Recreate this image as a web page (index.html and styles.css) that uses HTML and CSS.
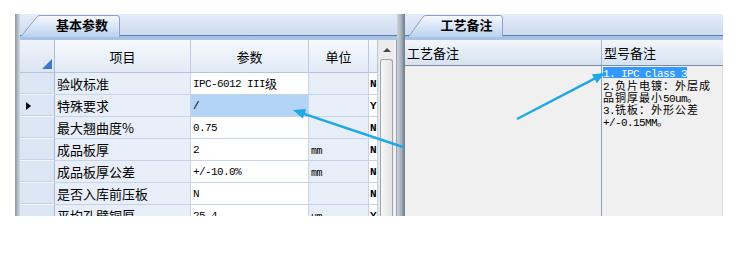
FILE: index.html
```html
<!DOCTYPE html>
<html lang="zh">
<head>
<meta charset="utf-8">
<title>参数</title>
<link rel="stylesheet" href="styles.css">
</head>
<body>
<div class="app">
  <div class="edge"></div>
  <section class="panel left">
    <div class="tabstrip">
      <div class="tab">
        <svg class="tabshape" viewBox="0 0 100 22" preserveAspectRatio="none"><defs><linearGradient id="tg1" x1="0" y1="0" x2="0" y2="1"><stop offset="0" stop-color="#f6f9fd"/><stop offset="1" stop-color="#bcd1ef"/></linearGradient></defs><path d="M0.5,22 L17,1.8 Q18,0.5 20,0.5 L97,0.5 Q99.5,0.5 99.5,3 L99.5,22" fill="url(#tg1)" stroke="#8ba2c2"/></svg>
        <span class="tabtext">基本参数</span>
      </div>
    </div>
    <div class="tabline"></div>
    <div class="gridwrap">
      <div class="grid">
        <div class="hd corner"><span class="tri"></span></div>
        <div class="hd">项目</div>
        <div class="hd">参数</div>
        <div class="hd">单位</div>
        <div class="hd"></div>

        <div class="rh"></div><div class="k">验收标准</div><div class="v"><span class="en">IPC-6012 III</span>级</div><div class="u"></div><div class="f">N</div>
        <div class="rh"><span class="ptr"></span></div><div class="k">特殊要求</div><div class="v sel"><span class="en">/</span></div><div class="u"></div><div class="f">Y</div>
        <div class="rh"></div><div class="k">最大翘曲度%</div><div class="v"><span class="en">0.75</span></div><div class="u"></div><div class="f">N</div>
        <div class="rh"></div><div class="k">成品板厚</div><div class="v"><span class="en">2</span></div><div class="u"><span class="en sm">mm</span></div><div class="f">N</div>
        <div class="rh"></div><div class="k">成品板厚公差</div><div class="v"><span class="en">+/-10.0%</span></div><div class="u"><span class="en sm">mm</span></div><div class="f">N</div>
        <div class="rh"></div><div class="k">是否入库前压板</div><div class="v"><span class="en">N</span></div><div class="u"></div><div class="f">N</div>
        <div class="rh"></div><div class="k">平均孔壁铜厚</div><div class="v"><span class="en">25.4</span></div><div class="u"><span class="en sm">um</span></div><div class="f">Y</div>
      </div>
      <div class="vscroll">
        <div class="up"><span class="uparrow"></span></div>
        <div class="thumb"></div>
      </div>
      <div class="gborder"></div>
    </div>
  </section>
  <div class="splitter"></div>
  <section class="panel right">
    <div class="tabstrip">
      <div class="tab tab2">
        <svg class="tabshape" viewBox="0 0 95 22" preserveAspectRatio="none"><defs><linearGradient id="tg2" x1="0" y1="0" x2="0" y2="1"><stop offset="0" stop-color="#f6f9fd"/><stop offset="1" stop-color="#bcd1ef"/></linearGradient></defs><path d="M0.5,22 L15,1.8 Q16,0.5 18,0.5 L92,0.5 Q94.5,0.5 94.5,3 L94.5,22" fill="url(#tg2)" stroke="#8ba2c2"/></svg>
        <span class="tabtext">工艺备注</span>
      </div>
    </div>
    <div class="tabline"></div>
    <div class="notes">
      <div class="nhead">
        <div class="c1">工艺备注</div>
        <div class="c2">型号备注</div>
      </div>
      <div class="nbody">
        <div class="c1"></div>
        <div class="c2 memo">
          <div class="ml"><span class="hl"><span class="en">1. IPC class 3</span></span></div>
          <div class="ml"><span class="en">2.</span>负片电镀：外层成</div>
          <div class="ml">品铜厚最小<span class="en">50um</span>。</div>
          <div class="ml"><span class="en">3.</span>铣板：外形公差</div>
          <div class="ml"><span class="en">+/-0.15MM</span>。</div>
        </div>
      </div>
    </div>
  </section>
</div>
<svg class="arrows" width="747" height="258" viewBox="0 0 747 258">
  <line x1="403" y1="147" x2="304" y2="113.8" stroke="#1fa8e6" stroke-width="2.4"/>
  <polygon points="293,110 306.2,109 302.8,118.6" fill="#1fa8e6"/>
  <line x1="517" y1="119" x2="595" y2="78.4" stroke="#1fa8e6" stroke-width="2.4"/>
  <polygon points="605,73 596.8,83.2 592,74.2" fill="#1fa8e6"/>
</svg>
</body>
</html>
```

FILE: styles.css
```css
* { box-sizing: border-box; margin: 0; padding: 0; }
html, body { background: #ffffff; }
body {
  position: relative;
  width: 747px;
  height: 258px;
  overflow: hidden;
  font-family: "Noto Sans CJK SC", sans-serif;
  font-size: 13px;
  color: #000;
}

.app {
  display: flex;
  width: 708px;
  height: 202px;
  margin: 14px 0 0 15px;
}

.edge {
  width: 5px;
  background: linear-gradient(90deg, #8c96a3, #b6bdc7 60%, #d6dce4);
}

.panel { display: flex; flex-direction: column; }
.left { width: 377px; }
.right { width: 318px; }

.tabstrip {
  height: 21px;
  display: flex;
  align-items: flex-end;
  background: linear-gradient(#e4edf9, #cddbef);
}
.right .tabstrip { padding-left: 3px; }

.tab {
  position: relative;
  z-index: 1;
  width: 100px;
  height: 22px;
  margin-bottom: -2px;
  display: flex;
  justify-content: center;
  padding-left: 24px;
}
.tab2 { width: 95px; padding-left: 22px; }
.tabshape {
  position: absolute;
  left: 0; top: 0;
  width: 100%; height: 100%;
}
.tabtext {
  position: relative;
  font-weight: bold;
  font-size: 13px;
  line-height: 19px;
}

.tabline {
  height: 5px;
  border-top: 1px solid #5f7ea8;
  background: #a9c3e8;
}

/* left grid */
.gridwrap {
  flex: 1;
  display: flex;
  overflow: hidden;
  background: #ffffff;
}
.grid {
  display: grid;
  grid-template-columns: 35px 136px 118px 60px 9px;
  grid-template-rows: 33px;
  grid-auto-rows: 22px;
  align-content: start;
  overflow: hidden;
  width: 358px;
}
.grid > div {
  display: flex;
  align-items: center;
  padding-left: 2px;
  white-space: nowrap;
  overflow: hidden;
  border-right: 1px solid #c5d4ea;
  border-bottom: 1px solid #c5d4ea;
}
.grid > .hd {
  justify-content: center;
  padding-left: 0;
  background: linear-gradient(#f7f9fd, #e1eaf6);
  border-right-color: #bccbe2;
  border-bottom-color: #b3c4dd;
}
.grid > .corner {
  position: relative;
  background: linear-gradient(#eef3fa, #dbe5f3);
  border-right-color: #a9bcd8;
}
.tri {
  position: absolute;
  right: 2px;
  bottom: 3px;
  width: 0; height: 0;
  border-left: 10px solid transparent;
  border-bottom: 10px solid #3e78c9;
}
.grid > .rh {
  position: relative;
  background: #dbe5f3;
  border-right-color: #a9bcd8;
  border-bottom-color: #f2f6fb;
  box-shadow: inset 0 -1px 0 #c3d2e8;
}
.ptr {
  position: absolute;
  left: 6px;
  top: 7px;
  width: 0; height: 0;
  border-top: 4px solid transparent;
  border-bottom: 4px solid transparent;
  border-left: 5px solid #000;
}
.grid > .k { background: #e8eef8; }
.grid > .v { background: #ffffff; font-size: 12px; }
.grid > .v.sel { background: #b3d3f7; }
.grid > .u { background: #e8eef8; }
.grid > .f {
  background: #ffffff;
  font-family: "Liberation Mono", monospace;
  font-weight: bold;
  font-size: 11px;
  padding-left: 1px;
}

.en {
  font-family: "Liberation Mono", monospace;
  font-size: 11px;
  letter-spacing: -0.6px;
}
.en.sm { font-size: 10px; padding-top: 3px; }

.vscroll {
  width: 16px;
  display: flex;
  flex-direction: column;
  background: #ececec;
  border-left: 1px solid #e2e2e2;
}
.up {
  height: 19px;
  display: flex;
  align-items: center;
  justify-content: center;
}
.uparrow {
  width: 0; height: 0;
  border-left: 4px solid transparent;
  border-right: 4px solid transparent;
  border-bottom: 4px solid #4a4a4a;
}
.thumb {
  flex: 1;
  margin: 0 1px;
  border: 1px solid #9ea4ac;
  border-bottom: none;
  border-radius: 3px 3px 0 0;
  background: linear-gradient(90deg, #f7f7f7, #e3e3e3);
}
.gborder {
  width: 3px;
  background: #f0f0f0;
  border-right: 1px solid #98a4b5;
}

.splitter {
  width: 8px;
  background: linear-gradient(90deg, #cdd2d9, #a9b2be 50%, #6b7889);
}

/* right notes */
.notes {
  flex: 1;
  display: flex;
  flex-direction: column;
}
.nhead {
  height: 26px;
  display: flex;
  background: linear-gradient(#f3f6fb, #d6e2f2);
  border-bottom: 1px solid #7d8ca1;
}
.nhead .c1 {
  width: 196px;
  padding-left: 2px;
  display: flex;
  align-items: center;
}
.nhead .c2 {
  flex: 1;
  padding-left: 2px;
  display: flex;
  align-items: center;
  border-left: 1px solid #a5b5cc;
}
.nbody {
  flex: 1;
  display: flex;
  background: #f0f0f0;
}
.nbody .c1 { width: 196px; }
.nbody .c2 {
  flex: 1;
  border-left: 1px solid #8fa3c2;
  border-right: 1px solid #d9d9d9;
}
.memo {
  padding: 1px 0 0 1px;
  font-size: 11px;
  letter-spacing: 1px;
}
.ml {
  height: 12px;
  line-height: 12px;
  white-space: nowrap;
}
.memo .en { font-size: 11px; letter-spacing: -0.6px; }
.hl {
  background: #3399ff;
  color: #ffffff;
  display: inline-block;
  height: 11px;
  line-height: 11px;
  vertical-align: top;
}

.arrows {
  position: absolute;
  left: 0;
  top: 0;
  pointer-events: none;
}
```
